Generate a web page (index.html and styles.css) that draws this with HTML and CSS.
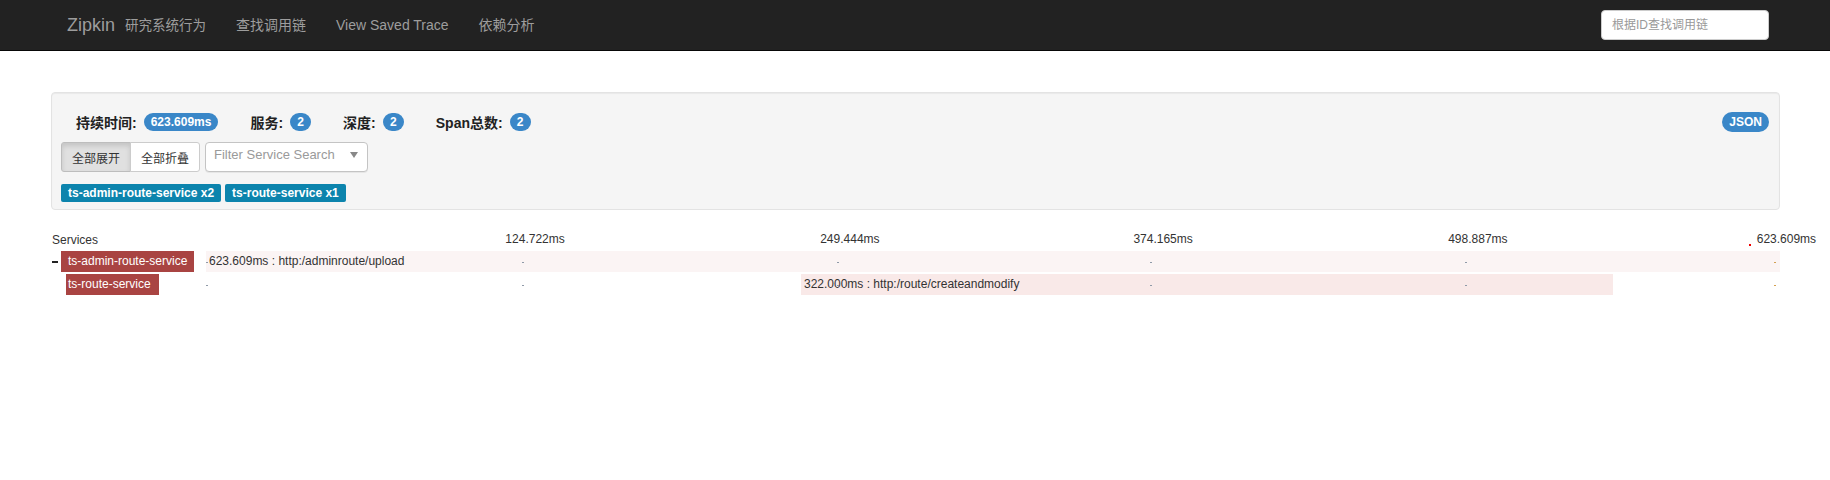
FILE: index.html
```html
<!DOCTYPE html>
<html lang="zh">
<head>
<meta charset="utf-8">
<title>Zipkin</title>
<link rel="stylesheet" href="styles.css">
</head>
<body>
<nav class="navbar">
  <div class="nav-left">
    <a class="brand">Zipkin</a>
    <span class="brand-sub">研究系统行为</span>
    <a class="nav-link">查找调用链</a>
    <a class="nav-link">View Saved Trace</a>
    <a class="nav-link">依赖分析</a>
  </div>
  <input class="trace-search" type="text" placeholder="根据ID查找调用链">
</nav>

<main class="page">
  <section class="summary">
    <div class="stats-row">
      <div class="stats">
        <span class="stat"><b class="stat-label">持续时间:</b><span class="badge">623.609ms</span></span>
        <span class="stat"><b class="stat-label">服务:</b><span class="badge">2</span></span>
        <span class="stat"><b class="stat-label">深度:</b><span class="badge">2</span></span>
        <span class="stat"><b class="stat-label">Span总数:</b><span class="badge">2</span></span>
      </div>
      <span class="badge badge-json">JSON</span>
    </div>
    <div class="controls">
      <div class="btn-group">
        <button class="btn btn-active">全部展开</button><button class="btn">全部折叠</button>
      </div>
      <div class="select">
        <span class="select-placeholder">Filter Service Search</span>
        <span class="caret"></span>
      </div>
    </div>
    <div class="tags">
      <span class="tag">ts-admin-route-service x2</span>
      <span class="tag">ts-route-service x1</span>
    </div>
  </section>

  <section class="trace">
    <div class="trace-row trace-header">
      <div class="svc-col"><span class="services-title">Services</span></div>
      <div class="timeline">
        <span class="tick-label" style="left:20.1%">124.722ms</span>
        <span class="tick-label" style="left:40.1%">249.444ms</span>
        <span class="tick-label" style="left:60%">374.165ms</span>
        <span class="tick-label" style="left:80%">498.887ms</span>
        <span class="red-dot" style="left:98%"></span>
        <span class="tick-label" style="left:99.6%">623.609ms</span>
      </div>
    </div>

    <div class="trace-row span-row">
      <div class="svc-col">
        <span class="toggle"></span><span class="svc-name">ts-admin-route-service</span>
      </div>
      <div class="timeline">
        <div class="bar bar-root" style="margin-left:0%;width:100%">623.609ms : http:/adminroute/upload</div>
        <span class="mark" style="left:0%"></span>
        <span class="mark" style="left:20.1%"></span>
        <span class="mark" style="left:40.1%"></span>
        <span class="mark" style="left:60%"></span>
        <span class="mark" style="left:80%"></span>
        <span class="mark mark-end" style="left:99.6%"></span>
      </div>
    </div>

    <div class="trace-row span-row">
      <div class="svc-col">
        <span class="svc-name svc-child">ts-route-service</span>
      </div>
      <div class="timeline">
        <div class="bar bar-child" style="margin-left:37.8%;width:51.6%">322.000ms : http:/route/createandmodify</div>
        <span class="mark" style="left:0%"></span>
        <span class="mark" style="left:20.1%"></span>
        <span class="mark" style="left:40.1%"></span>
        <span class="mark" style="left:60%"></span>
        <span class="mark" style="left:80%"></span>
        <span class="mark mark-end" style="left:99.6%"></span>
      </div>
    </div>
  </section>
</main>
</body>
</html>
```

FILE: styles.css
```css
* {
  box-sizing: border-box;
}

body {
  margin: 0;
  font-family: "Liberation Sans", Arial, "Noto Sans CJK SC", sans-serif;
  font-size: 12px;
  color: #333;
  background: #fff;
}

/* ---------- navbar ---------- */
.navbar {
  display: flex;
  align-items: center;
  justify-content: space-between;
  height: 51px;
  padding: 0 61px 1px 67px;
  background: #222;
  border-bottom: 1px solid #080808;
}

.nav-left {
  display: flex;
  align-items: center;
}

.brand {
  font-size: 18px;
  line-height: 20px;
  color: #9d9d9d;
}

.brand-sub {
  margin-left: 10px;
  padding-right: 15px;
  padding-top: 2px;
  font-size: 13.5px;
  line-height: 20px;
  color: #9d9d9d;
}

.nav-link {
  padding: 0 15px;
  font-size: 14px;
  line-height: 20px;
  color: #9d9d9d;
}

.trace-search {
  width: 168px;
  height: 30px;
  padding: 0 10px;
  border: 1px solid #ccc;
  border-radius: 4px;
  background: #fff;
  font-family: "Liberation Sans", Arial, "Noto Sans CJK SC", sans-serif;
  font-size: 12px;
  color: #555;
  outline: none;
}

.trace-search::placeholder {
  color: #999;
}

/* ---------- page ---------- */
.page {
  margin: 41px 50px 0 51px;
}

.summary {
  padding: 9px 9px 7px 9px;
  background: #f5f5f5;
  border: 1px solid #e3e3e3;
  border-radius: 4px;
  box-shadow: inset 0 1px 1px rgba(0, 0, 0, 0.05);
}

.stats-row {
  display: flex;
  align-items: center;
  justify-content: space-between;
  height: 40px;
  padding-left: 15px;
  padding-right: 1px;
}

.stats {
  display: flex;
  align-items: center;
  gap: 32px;
}

.stat {
  display: flex;
  align-items: center;
  gap: 7px;
}

.stat-label {
  font-size: 14px;
  font-weight: bold;
  color: #222;
}

.badge {
  display: inline-block;
  padding: 3px 7px;
  font-size: 12px;
  font-weight: bold;
  line-height: 12px;
  color: #fff;
  background: #3a87c8;
  border-radius: 10px;
  min-width: 21px;
  text-align: center;
}

.badge-json {
  padding: 4px 7px;
}

.controls {
  display: flex;
  align-items: center;
  gap: 5px;
  height: 30px;
}

.btn-group {
  display: flex;
}

.btn {
  height: 30px;
  padding: 0 10px;
  font-family: "Liberation Sans", Arial, "Noto Sans CJK SC", sans-serif;
  font-size: 12px;
  color: #333;
  background: #fff;
  border: 1px solid #ccc;
  cursor: pointer;
}

.btn:first-child {
  border-radius: 3px 0 0 3px;
}

.btn:last-child {
  margin-left: -1px;
  border-radius: 0 3px 3px 0;
}

.btn-active {
  background: #e0e0e0;
  border-color: #bdbdbd;
  box-shadow: inset 0 3px 5px rgba(0, 0, 0, 0.125);
}

.select {
  display: flex;
  align-items: center;
  justify-content: space-between;
  width: 163px;
  height: 30px;
  padding: 0 9px 0 8px;
  background: #fff;
  border: 1px solid #c4c4c4;
  border-radius: 4px;
  box-shadow: 0 1px 0 rgba(0, 0, 0, 0.06);
}

.select-placeholder {
  font-size: 13px;
  color: #9a9a9a;
  margin-top: -5px;
}

.caret {
  width: 0;
  height: 0;
  border-left: 4px solid transparent;
  border-right: 4px solid transparent;
  border-top: 6px solid #888;
  margin-top: -4px;
}

.tags {
  display: flex;
  gap: 4px;
  margin-top: 12px;
}

.tag {
  display: inline-block;
  height: 18px;
  padding: 0 7px;
  font-size: 12px;
  font-weight: bold;
  line-height: 18px;
  color: #fff;
  background: #0c84ad;
  border-radius: 2px;
}

/* ---------- trace ---------- */
.trace {
  margin-top: 21px;
}

.trace-row {
  display: flex;
}

.trace-header {
  height: 20px;
  align-items: center;
}

.span-row {
  height: 21px;
  margin-top: 2px;
}

.trace-header + .span-row {
  margin-top: 0;
}

.svc-col {
  display: flex;
  align-items: center;
  width: 155px;
  flex: none;
}

.services-title {
  padding-left: 1px;
  font-size: 12px;
  color: #333;
  margin-top: -2px;
}

.toggle {
  display: inline-block;
  width: 6px;
  height: 2px;
  margin-left: 1px;
  margin-right: 3px;
  background: #222;
}

.svc-name {
  display: inline-block;
  height: 21px;
  padding: 0 7px;
  font-size: 12px;
  line-height: 21px;
  color: #fff;
  background: #a94442;
}

.svc-child {
  margin-left: 15px;
  padding: 0 8px 0 2px;
}

.timeline {
  position: relative;
  flex: 1;
  height: 100%;
}

.tick-label {
  position: absolute;
  top: 1px;
  margin-left: -17px;
  font-size: 12px;
  line-height: 14px;
  color: #333;
  white-space: nowrap;
}

.red-dot {
  position: absolute;
  top: 13px;
  width: 2px;
  height: 2px;
  background: #e00;
}

.bar {
  height: 21px;
  padding-left: 3px;
  font-size: 12px;
  line-height: 21px;
  color: #333;
  white-space: nowrap;
}

.bar-root {
  background: #fbf4f4;
}

.bar-child {
  background: #f9e9e8;
}

.mark {
  position: absolute;
  top: 11px;
  width: 2px;
  height: 1px;
  background: #8f9aa8;
}

.mark-end {
  background: #d4a050;
}
```
